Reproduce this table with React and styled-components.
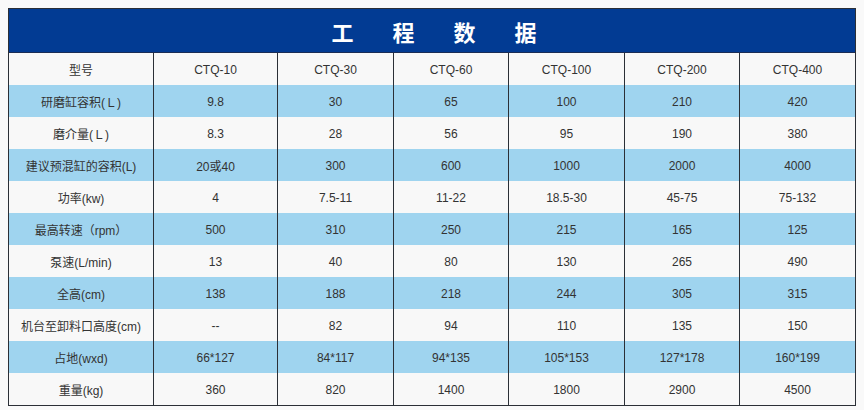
import React from "react";
import styled, { createGlobalStyle } from "styled-components";

const Global = createGlobalStyle`
  html, body { margin: 0; padding: 0; background: #f9f9f9; }
  body { font-family: "Liberation Sans", Arial, "Noto Sans CJK SC", sans-serif; }
`;

const Page = styled.div`
  padding: 8px 0 0 8px;
`;

const Table = styled.div`
  width: 846px;
  border: 1px solid #2b2f36;
  display: grid;
  grid-template-columns: 144px 124px 116px 115px 116px 115px 116px;
`;

const Title = styled.div`
  grid-column: 1 / -1;
  height: 43px;
  background: #023b93;
  border-bottom: 1px solid #1b2d55;
  display: flex;
  align-items: center;
  justify-content: center;
  gap: 39px;
  padding-left: 4px;
  color: #ffffff;
  font-family: "Noto Sans CJK SC", sans-serif;
  font-weight: 700;
  font-size: 22px;
`;

const Cell = styled.div`
  height: 32px;
  display: flex;
  align-items: center;
  justify-content: center;
  font-size: 12px;
  color: #333;
  font-family: "Liberation Sans", Arial, "Noto Sans CJK SC", sans-serif;
  background: ${(p) => (p.$alt ? "#9fd4ef" : "#f8f8f8")};
  border-left: ${(p) => (p.$first ? "none" : "1px solid #2b2f36")};
  padding-top: 1px;
  box-sizing: border-box;
`;

const rows = [
  ["型号", "CTQ-10", "CTQ-30", "CTQ-60", "CTQ-100", "CTQ-200", "CTQ-400"],
  ["研磨缸容积(Ｌ)", "9.8", "30", "65", "100", "210", "420"],
  ["磨介量(Ｌ)", "8.3", "28", "56", "95", "190", "380"],
  ["建议预混缸的容积(L)", "20或40", "300", "600", "1000", "2000", "4000"],
  ["功率(kw)", "4", "7.5-11", "11-22", "18.5-30", "45-75", "75-132"],
  ["最高转速（rpm）", "500", "310", "250", "215", "165", "125"],
  ["泵速(L/min)", "13", "40", "80", "130", "265", "490"],
  ["全高(cm)", "138", "188", "218", "244", "305", "315"],
  ["机台至卸料口高度(cm)", "--", "82", "94", "110", "135", "150"],
  ["占地(wxd)", "66*127", "84*117", "94*135", "105*153", "127*178", "160*199"],
  ["重量(kg)", "360", "820", "1400", "1800", "2900", "4500"],
];

export default function App() {
  return (
    <Page>
      <Global />
      <Table>
        <Title>
          <span>工</span>
          <span>程</span>
          <span>数</span>
          <span>据</span>
        </Title>
        {rows.map((r, i) =>
          r.map((c, j) => (
            <Cell key={i + "-" + j} $alt={i % 2 === 1} $first={j === 0}>
              {c}
            </Cell>
          ))
        )}
      </Table>
    </Page>
  );
}
